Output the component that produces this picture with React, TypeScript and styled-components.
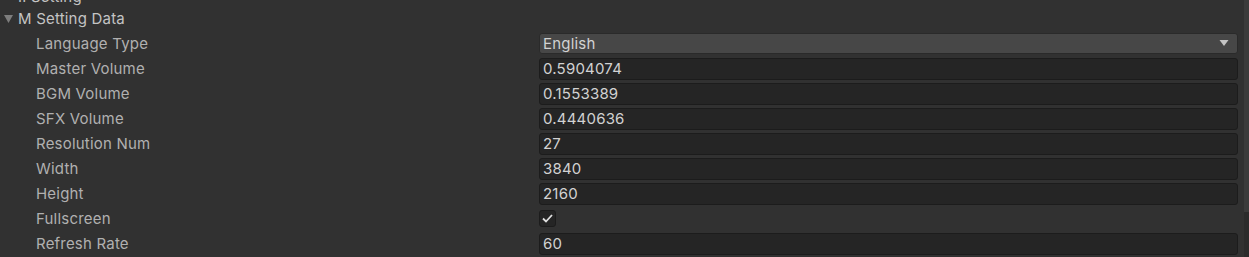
import React from "react";
import styled, { createGlobalStyle } from "styled-components";

const GlobalStyle = createGlobalStyle`
  html, body {
    margin: 0;
    padding: 0;
    background: #313131;
    overflow: hidden;
  }
  body {
    font-family: Inter, "Noto Sans", sans-serif;
  }
`;

const Page = styled.div`
  display: flex;
  width: 1249px;
  height: 257px;
  overflow: hidden;
  background: #313131;
`;

const Inspector = styled.div`
  flex: 1;
  display: flex;
  flex-direction: column;
  margin-top: -14px;
  padding-right: 6px;
`;

const Scrollbar = styled.div`
  width: 5px;
  display: flex;
  flex-direction: column;
  background: #2b2b2b;
`;

const Thumb = styled.div`
  height: 212px;
  background: #3b3b3b;
`;

const Foldout = styled.div<{ $indent?: number; $h?: number }>`
  height: ${(p) => p.$h ?? 25}px;
  display: flex;
  align-items: center;
  gap: 5px;
  padding-left: ${(p) => p.$indent ?? 4}px;
  color: #c4c4c4;
  font-size: 15px;
  letter-spacing: 0.2px;
  white-space: nowrap;
`;

const Arrow = styled.svg`
  width: 9px;
  height: 8px;
  flex: none;
`;

const Row = styled.div`
  height: 25px;
  display: grid;
  grid-template-columns: 503px 1fr;
  align-items: center;
  padding-left: 36px;
`;

const Label = styled.div`
  color: #b0b0b0;
  font-size: 15px;
  letter-spacing: 0.2px;
  white-space: nowrap;
  margin-top: -1px;
`;

const TextField = styled.div`
  height: 22px;
  box-sizing: border-box;
  display: flex;
  align-items: center;
  padding: 0 0 1px 3px;
  background: #252525;
  border: 1px solid #1c1c1c;
  border-radius: 3px;
  color: #d2d2d2;
  font-size: 15px;
  letter-spacing: 0.2px;
`;

const Dropdown = styled.div`
  height: 21px;
  box-sizing: border-box;
  display: flex;
  align-items: center;
  justify-content: space-between;
  padding: 0 8px 1px 3px;
  background: #474747;
  border: 1px solid #2a2a2a;
  border-radius: 3px;
  color: #d2d2d2;
  font-size: 15px;
  letter-spacing: 0.2px;
`;

const Checkbox = styled.div`
  width: 17px;
  height: 17px;
  box-sizing: border-box;
  display: flex;
  align-items: center;
  justify-content: center;
  background: #252525;
  border: 1px solid #1c1c1c;
  border-radius: 3px;
`;

const fields: { label: string; value: string }[] = [
  { label: "Master Volume", value: "0.5904074" },
  { label: "BGM Volume", value: "0.1553389" },
  { label: "SFX Volume", value: "0.4440636" },
  { label: "Resolution Num", value: "27" },
  { label: "Width", value: "3840" },
  { label: "Height", value: "2160" },
];

const App: React.FC = () => {
  return (
    <Page>
      <GlobalStyle />
      <Inspector>
        <Foldout $indent={18} $h={20}>
          II Setting
        </Foldout>
        <Foldout>
          <Arrow viewBox="0 0 9 8">
            <path d="M0 0 L9 0 L4.5 8 Z" fill="#7d7d7d" />
          </Arrow>
          M Setting Data
        </Foldout>

        <Row>
          <Label>Language Type</Label>
          <Dropdown>
            English
            <Arrow viewBox="0 0 9 6" style={{ width: 10, height: 6 }}>
              <path d="M0 0 L9 0 L4.5 6 Z" fill="#c4c4c4" />
            </Arrow>
          </Dropdown>
        </Row>

        {fields.map((f) => (
          <Row key={f.label}>
            <Label>{f.label}</Label>
            <TextField>{f.value}</TextField>
          </Row>
        ))}

        <Row>
          <Label>Fullscreen</Label>
          <Checkbox>
            <svg width="11" height="9" viewBox="0 0 11 9">
              <path d="M1 4.5 L4 7.5 L10 1" stroke="#e0e0e0" strokeWidth="1.8" fill="none" />
            </svg>
          </Checkbox>
        </Row>

        <Row>
          <Label>Refresh Rate</Label>
          <TextField>60</TextField>
        </Row>
      </Inspector>
      <Scrollbar>
        <Thumb />
      </Scrollbar>
    </Page>
  );
};

export default App;
